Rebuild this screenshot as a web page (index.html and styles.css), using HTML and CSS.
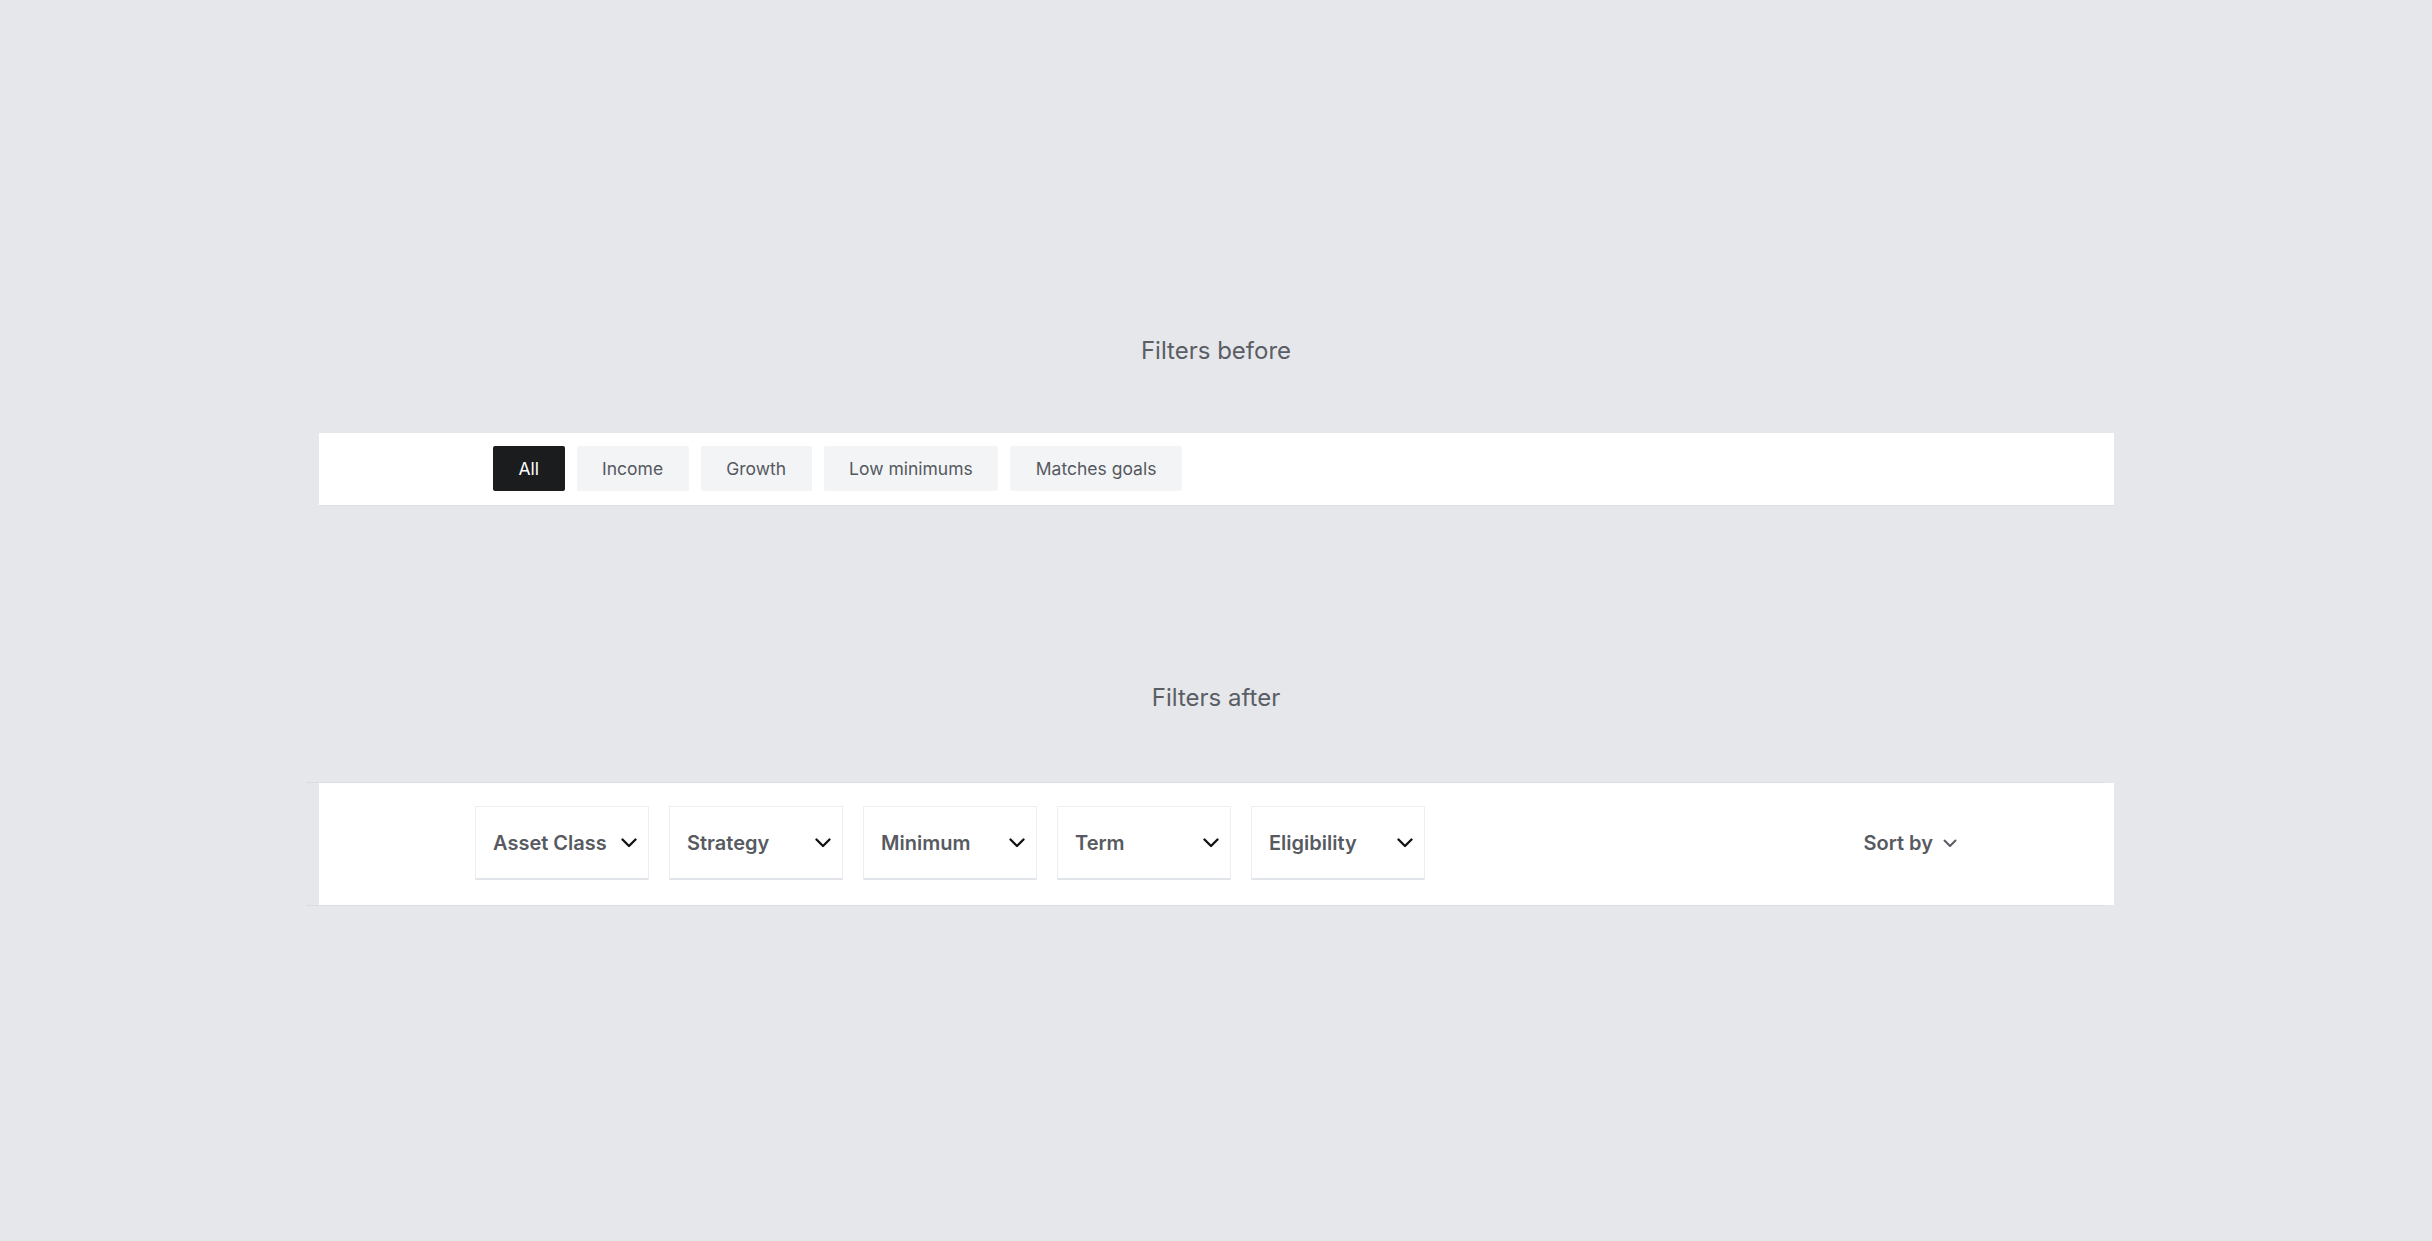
FILE: index.html
```html
<!DOCTYPE html>
<html lang="en">
<head>
  <meta charset="UTF-8" />
  <meta name="viewport" content="width=device-width, initial-scale=1" />
  <title>Filters before / after</title>
  <link rel="stylesheet" href="styles.css">
</head>
<body>
  <section class="compare">
    <h2 class="compare-title">Filters before</h2>
    <div class="bar bar-before">
      <div class="bar-inner chips">
        <button class="chip active">All</button>
        <button class="chip">Income</button>
        <button class="chip">Growth</button>
        <button class="chip">Low minimums</button>
        <button class="chip">Matches goals</button>
      </div>
    </div>
  </section>

  <section class="compare compare-after">
    <h2 class="compare-title">Filters after</h2>
    <div class="bar bar-after">
      <div class="bar-inner selects">
        <button class="select">Asset Class
          <svg class="caret" viewBox="0 0 16 10" aria-hidden="true"><path d="M1.5 1.5 L8 8 L14.5 1.5" /></svg>
        </button>
        <button class="select">Strategy
          <svg class="caret" viewBox="0 0 16 10" aria-hidden="true"><path d="M1.5 1.5 L8 8 L14.5 1.5" /></svg>
        </button>
        <button class="select">Minimum
          <svg class="caret" viewBox="0 0 16 10" aria-hidden="true"><path d="M1.5 1.5 L8 8 L14.5 1.5" /></svg>
        </button>
        <button class="select">Term
          <svg class="caret" viewBox="0 0 16 10" aria-hidden="true"><path d="M1.5 1.5 L8 8 L14.5 1.5" /></svg>
        </button>
        <button class="select">Eligibility
          <svg class="caret" viewBox="0 0 16 10" aria-hidden="true"><path d="M1.5 1.5 L8 8 L14.5 1.5" /></svg>
        </button>
        <button class="sort">Sort by
          <svg class="caret caret-sm" viewBox="0 0 14 9" aria-hidden="true"><path d="M1.5 1.5 L7 7 L12.5 1.5" /></svg>
        </button>
      </div>
    </div>
  </section>
</body>
</html>
```

FILE: styles.css
```css
body {
  font-family: Inter, "Noto Sans", Arial, sans-serif;
  background: #e5e7eb;
  margin: 0;
  min-height: 100vh;
  display: flex;
  flex-direction: column;
  justify-content: center;
  color: #55595f;
}

/* Section titles */
.compare {
  display: flex;
  flex-direction: column;
  align-items: center;
}
.compare-after {
  margin-top: 177px;
}
.compare-title {
  margin: 0 0 67px;
  font-size: 24px;
  line-height: 30px;
  font-weight: 400;
  color: #5a5e64;
}
.compare-after .compare-title {
  margin-bottom: 70px;
}

/* White bars */
.bar {
  position: relative;
  width: 1795px;
  background: #fff;
  box-sizing: border-box;
}
.bar-before {
  padding: 13px 0 14px;
  border-bottom: 1px solid #dde0e5;
}
.bar-after {
  padding: 23px 0 25px;
}
/* offset rule lines above and below the new bar */
.bar-after::before {
  content: "";
  position: absolute;
  top: -1px;
  bottom: -1px;
  left: -13px;
  right: 9px;
  border-top: 1px solid #d9dde2;
  border-bottom: 1px solid #d9dde2;
  z-index: -1;
}
.bar-inner {
  width: 1482px;
  margin: 0 auto;
  display: flex;
  align-items: center;
}

/* Old chips */
.chips {
  padding-left: 18px;
  box-sizing: border-box;
  gap: 12px;
}
.chip {
  height: 45px;
  padding: 0 25.5px;
  border: none;
  border-radius: 2px;
  background: #f3f4f6;
  color: #55595f;
  font-family: inherit;
  font-size: 17.5px;
  cursor: pointer;
}
.chip.active {
  background: #1b1c1e;
  color: #fff;
}

/* New dropdowns */
.selects {
  gap: 20px;
}
.select {
  width: 174px;
  height: 74px;
  padding: 0 11px 0 17px;
  display: flex;
  align-items: center;
  justify-content: space-between;
  background: #fff;
  border: 1px solid #eceef1;
  border-bottom: 2px solid #e1e4e8;
  border-radius: 1px;
  box-sizing: border-box;
  font-family: inherit;
  font-size: 20px;
  font-weight: 600;
  color: #575b61;
  cursor: pointer;
}
.caret {
  width: 16px;
  height: 10px;
  fill: none;
  stroke: #111;
  stroke-width: 2.3;
  stroke-linecap: round;
  stroke-linejoin: round;
}
.sort {
  margin-left: auto;
  display: flex;
  align-items: center;
  gap: 10px;
  padding: 0;
  background: none;
  border: none;
  font-family: inherit;
  font-size: 20px;
  font-weight: 600;
  color: #575b61;
  cursor: pointer;
}
.caret-sm {
  width: 14px;
  height: 9px;
  stroke: #5a5e64;
  stroke-width: 2;
}
```
